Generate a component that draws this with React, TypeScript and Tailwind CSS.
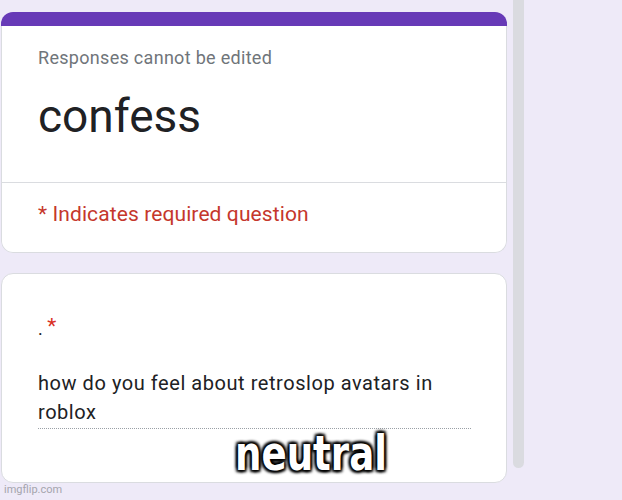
export default function App() {
  return (
    <main
      className="relative h-[500px] w-[622px] overflow-hidden bg-[#eeeaf8] text-[#202124]"
      style={{ fontFamily: "Roboto, 'Liberation Sans', sans-serif" }}
    >
      <div className="flex">
        <div className="ml-px w-[506px]">
          {/* header card */}
          <section className="mt-[12px] overflow-hidden rounded-[12px]">
            <div className="h-[14px] bg-[#673ab7]" />
            <div className="rounded-b-[12px] border-x border-b border-[#dadce0] bg-white">
              <div className="border-b border-[#dadce0] px-[36px] pt-[20px] pb-[38px]">
                <p className="text-[18px] leading-[24px] tracking-[0.3px] text-[#70757a]">Responses cannot be edited</p>
                <h1 className="mt-[18px] text-[46px] leading-[56px] text-[#202124]">confess</h1>
              </div>
              <p className="px-[36px] pt-[17px] pb-[24px] text-[21px] leading-[28px] tracking-[0.1px] text-[#c5372c]">
                * Indicates required question
              </p>
            </div>
          </section>

          {/* question card */}
          <section className="mt-[20px] h-[210px] rounded-[12px] border border-[#dadce0] bg-white px-[36px] pt-[42px]">
            <p className="text-[18px] leading-[24px]">
              . <span className="relative -top-[2px] text-[21px] text-[#d93025]">*</span>
            </p>
            <div className="mt-[28px] w-[433px]">
              <p className="text-[20px] leading-[29px] tracking-[0.55px]">how do you feel about retroslop avatars in roblox</p>
              <div className="mt-px border-b border-dotted border-[#9aa0a6]" />
            </div>
          </section>
        </div>

        <div className="ml-[6px] h-[468px] w-[11px] rounded-b-full bg-[#dadbe0]" />
      </div>

      <span
        className="absolute left-[235px] top-[423px] origin-left scale-x-[0.86] text-[48px] leading-[60px] text-white"
        style={{
          fontFamily: "'Liberation Sans Narrow', 'DejaVu Sans Condensed', 'Liberation Sans', sans-serif",
          fontWeight: 700,
          textShadow:
            "2px 2px 3px #000, -2px -2px 3px #000, 2px -2px 3px #000, -2px 2px 3px #000, 0 0 5px #000",
        }}
      >
        neutral
      </span>

      <span className="absolute bottom-[2px] left-[4px] text-[11px] leading-[16px] text-[#a5a5ad]">imgflip.com</span>
    </main>
  );
}
